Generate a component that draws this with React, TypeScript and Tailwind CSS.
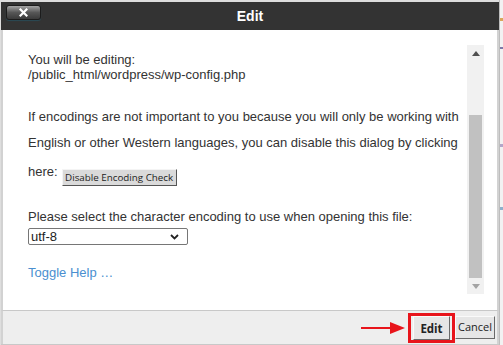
import React from "react"

const ScrollBar = () => (
    <div className="w-[17px] h-[249px] bg-[#f1f1f1] flex flex-col shrink-0">
        <div className="h-[17px] flex items-center justify-center">
            <svg width="8" height="5" viewBox="0 0 8 5"><path d="M0 5 L4 0 L8 5 Z" fill="#505050" /></svg>
        </div>
        <div className="flex-1 flex flex-col px-[2px]">
            <div className="h-[53px]" />
            <div className="h-[163px] bg-[#c1c1c1]" />
        </div>
        <div className="h-[16px] flex items-center justify-center">
            <svg width="8" height="5" viewBox="0 0 8 5"><path d="M0 0 L8 0 L4 5 Z" fill="#a3a3a3" /></svg>
        </div>
    </div>
)

export default function App() {
    return (
        <div className="w-[503px] h-[345px] bg-[#dedede] flex overflow-hidden font-['Liberation_Sans',Arial,sans-serif] text-[#333]">
            <div className="w-[1px]" />
            <div className="mt-[2px] w-[498px] h-[343px] flex flex-col bg-white border-b border-[#c8c8c8]">
                <div className="h-[28px] bg-[#333333] grid grid-cols-[1fr_auto_1fr] items-center">
                    <div className="self-start">
                        <button className="mt-[3px] ml-[5px] w-[35px] h-[15px] rounded-[3px] border border-[#1c1c1c] bg-gradient-to-b from-[#a5a5a5] via-[#575757] to-[#3a3a3a] flex items-center justify-center shadow-[0_1px_1px_#2a4a55]">
                            <svg width="9" height="9" viewBox="0 0 9 9">
                                <path d="M1.5 1.5 L7.5 7.5 M7.5 1.5 L1.5 7.5" stroke="#fff" strokeWidth="2.2" strokeLinecap="square" />
                            </svg>
                        </button>
                    </div>
                    <div className="text-white font-bold text-[14px] leading-[16px]">Edit</div>
                    <div />
                </div>

                <div className="h-[280px] border-x-2 border-[#d2d2d2] flex pt-[15px] pb-[16px] pr-[13px]">
                    <div className="flex-1 pl-[25px] pt-[7px] text-[13px] whitespace-nowrap">
                        <div className="leading-[15px]">
                            You will be editing:<br />/public_html/wordpress/wp-config.php
                        </div>
                        <p className="mt-[22px] leading-[26px]">
                            If encodings are not important to you because you will only be working with<br />
                            English or other Western languages, you can disable this dialog by clicking
                        </p>
                        <div className="mt-[8px] flex items-start leading-[15px]">
                            <span>here:</span>
                            <button className="ml-[4px] mt-[5px] w-[115px] h-[17px] bg-[#dadada] border border-t-[#f4f4f4] border-l-[#f4f4f4] border-r-[#555] border-b-[#555] font-['Open_Sans',sans-serif] text-[9.8px] leading-[15px] text-[#222]">
                                Disable Encoding Check
                            </button>
                        </div>
                        <div className="mt-[23px] leading-[15px]">
                            Please select the character encoding to use when opening this file:
                        </div>
                        <div className="mt-[4px] w-[160px] h-[17px] border border-[#767676] rounded-[2px] flex items-center justify-between pl-[2px] pr-[8px] leading-[15px] text-[#222]">
                            <span>utf-8</span>
                            <svg width="9" height="6" viewBox="0 0 9 6">
                                <path d="M1 1 L4.5 4.5 L8 1" stroke="#222" strokeWidth="1.8" fill="none" />
                            </svg>
                        </div>
                        <div className="mt-[20px] leading-[15px] text-[#4a8fd0]">Toggle Help …</div>
                    </div>
                    <ScrollBar />
                </div>

                <div className="h-[34px] bg-[#eeeeee] border-t border-[#c8c8c8] border-x-2 border-x-[#d2d2d2] flex items-center justify-end pr-[2px]">
                    <svg width="44" height="14" viewBox="0 0 44 14" className="mr-[3px]">
                        <path d="M0 7 H31" stroke="#e8141b" strokeWidth="2" />
                        <path d="M29 1 L44 7 L29 13 Z" fill="#e8141b" />
                    </svg>
                    <div className="w-[47px] h-[30px] border-[3px] border-[#e8141b] px-[2px]">
                        <button className="w-[37px] h-[24px] bg-[#e6e6e6] border border-t-[#fafafa] border-l-[#fafafa] border-r-[#6a6a6a] border-b-[#6a6a6a] font-['Open_Sans',sans-serif] font-bold text-[11.5px] text-[#222]">
                            Edit
                        </button>
                    </div>
                    <button className="w-[40px] h-[23px] bg-[#e6e6e6] border border-t-[#fafafa] border-l-[#fafafa] border-r-[#6a6a6a] border-b-[#6a6a6a] font-['Open_Sans',sans-serif] text-[11px] text-[#222]">
                        Cancel
                    </button>
                </div>
            </div>
            <div className="w-[4px] flex flex-col bg-[#f2f2f2] border-l border-[#bdbdbd]">
                <div className="h-[18px]" />
                <div className="h-[3px] bg-[#d9a65a]" />
                <div className="h-[26px]" />
                <div className="h-[2px] bg-[#7d7aa8]" />
                <div className="h-[95px]" />
                <div className="h-[3px] bg-[#b3a6c9]" />
                <div className="h-[60px]" />
                <div className="h-[3px] bg-[#8fb0cc]" />
            </div>
        </div>
    )
}
